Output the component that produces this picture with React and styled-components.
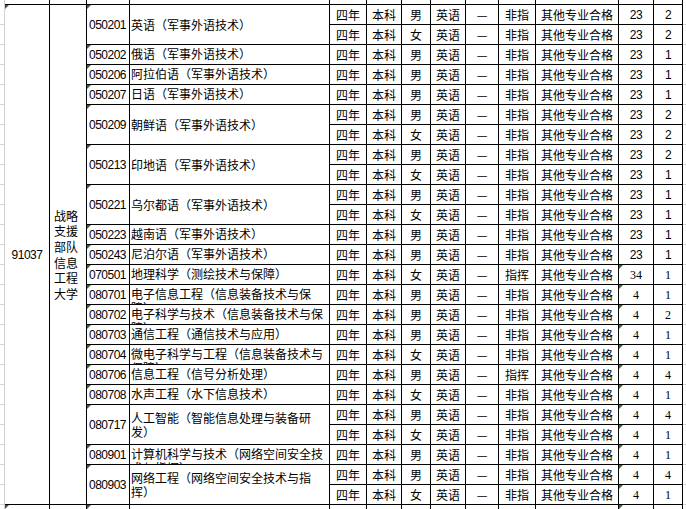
import React from "react"
import styled, { createGlobalStyle, css } from "styled-components"

const GlobalStyle = createGlobalStyle`
  html, body {
    margin: 0;
    padding: 0;
    background: #ffffff;
    overflow: hidden;
  }
  body {
    font-family: "Noto Sans CJK SC", "Liberation Sans", sans-serif;
    font-size: 12px;
    color: #000000;
  }
`

// column widths, measured between the black grid lines
const COLS = [45, 37, 43, 200, 37, 35, 29, 35, 33, 37, 83, 35, 29]

const groups = [
  { code: "050201", name: "英语（军事外语技术）", rows: [["男", "非指", "23", "2"], ["女", "非指", "23", "2"]] },
  { code: "050202", name: "俄语（军事外语技术）", rows: [["男", "非指", "23", "1"]] },
  { code: "050206", name: "阿拉伯语（军事外语技术）", rows: [["男", "非指", "23", "1"]] },
  { code: "050207", name: "日语（军事外语技术）", rows: [["男", "非指", "23", "1"]] },
  { code: "050209", name: "朝鲜语（军事外语技术）", rows: [["男", "非指", "23", "2"], ["女", "非指", "23", "2"]] },
  { code: "050213", name: "印地语（军事外语技术）", rows: [["男", "非指", "23", "2"], ["女", "非指", "23", "1"]] },
  { code: "050221", name: "乌尔都语（军事外语技术）", rows: [["男", "非指", "23", "1"], ["女", "非指", "23", "1"]] },
  { code: "050223", name: "越南语（军事外语技术）", rows: [["男", "非指", "23", "1"]] },
  { code: "050243", name: "尼泊尔语（军事外语技术）", rows: [["男", "非指", "23", "1"]] },
  { code: "070501", name: "地理科学（测绘技术与保障）", serif: true, rows: [["女", "指挥", "34", "1"]] },
  { code: "080701", name: "电子信息工程（信息装备技术与保障）", serif: true, rows: [["男", "非指", "4", "1"]] },
  { code: "080702", name: "电子科学与技术（信息装备技术与保障）", serif: true, rows: [["男", "非指", "4", "2"]] },
  { code: "080703", name: "通信工程（通信技术与应用）", serif: true, rows: [["男", "非指", "4", "1"]] },
  { code: "080704", name: "微电子科学与工程（信息装备技术与保障）", serif: true, rows: [["女", "非指", "4", "1"]] },
  { code: "080706", name: "信息工程（信号分析处理）", serif: true, rows: [["男", "指挥", "4", "4"]] },
  { code: "080708", name: "水声工程（水下信息技术）", serif: true, rows: [["女", "非指", "4", "1"]] },
  { code: "080717", name: "人工智能（智能信息处理与装备研发）", serif: true, rows: [["男", "非指", "4", "4"], ["女", "非指", "4", "1"]] },
  { code: "080901", name: "计算机科学与技术（网络空间安全技术与指挥）", serif: true, rows: [["男", "非指", "4", "1"]] },
  { code: "080903", name: "网络工程（网络空间安全技术与指挥）", serif: true, rows: [["男", "非指", "4", "4"], ["女", "非指", "4", "1"]] },
]

const Page = styled.div`
  display: flex;
  height: 509px;
  overflow: hidden;
`

const Gutter = styled.div`
  flex: ${(p) => (p.$grow ? "1 1 auto" : "0 0 4px")};
  background-image: repeating-linear-gradient(
    to bottom,
    transparent 0,
    transparent 19px,
    #d6d6d6 19px,
    #d6d6d6 20px
  );
  background-position: 0 5px;
`

const Sheet = styled.div`
  display: grid;
  grid-template-columns: ${COLS.map((w) => w + "px").join(" ")};
  grid-template-rows: 5px repeat(25, 20px) 20px;
  border-left: 1px solid #d0d0d0;
  align-self: flex-start;
`

const Cell = styled.div`
  position: relative;
  box-sizing: border-box;
  grid-column: ${(p) => p.$col};
  grid-row: ${(p) => p.$row} / span ${(p) => p.$span || 1};
  border-right: 1px solid #000000;
  border-bottom: 1px solid #000000;
  overflow: hidden;
  display: flex;
  align-items: center;
  justify-content: center;
  line-height: 14px;
  white-space: nowrap;

  ${(p) =>
    p.$flag &&
    css`
      &::before {
        content: "";
        position: absolute;
        top: 0;
        left: 0;
        border-style: solid;
        border-width: 4px 4px 0 0;
        border-color: #2b6e35 transparent transparent transparent;
      }
    `}
`

const NumCell = styled(Cell)`
  font-family: ${(p) => (p.$serif ? `"Liberation Serif", serif` : `"Liberation Sans", sans-serif`)};
  letter-spacing: ${(p) => (p.$serif ? "0" : "-0.5px")};
`

const CodeCell = styled(Cell)`
  justify-content: flex-start;
  padding-left: 2px;
  font-family: "Liberation Sans", sans-serif;
  letter-spacing: -0.5px;
`

const NameCell = styled(Cell)`
  justify-content: flex-start;
  align-items: ${(p) => (p.$span > 1 ? "center" : "flex-start")};
  padding: ${(p) => (p.$span > 1 ? "0 2px 0 1px" : "2px 2px 0 1px")};
  white-space: normal;
  line-height: 14px;
`

const SchoolCell = styled(Cell)`
  justify-content: flex-start;
  padding: 0 4px;
  white-space: normal;
  line-height: 15.6px;
`

const STUB = COLS.map((_, i) => i + 1)

export default function App() {
  let row = 2
  const body = []

  groups.forEach((g) => {
    const span = g.rows.length
    body.push(
      <CodeCell key={g.code + "c"} $col={3} $row={row} $span={span} $flag>
        {g.code}
      </CodeCell>,
      <NameCell key={g.code + "n"} $col={4} $row={row} $span={span}>
        {g.name}
      </NameCell>
    )
    g.rows.forEach(([sex, kind, plan, count], i) => {
      const r = row + i
      const k = g.code + "-" + i
      body.push(
        <Cell key={k + "e"} $col={5} $row={r}>四年</Cell>,
        <Cell key={k + "f"} $col={6} $row={r}>本科</Cell>,
        <Cell key={k + "g"} $col={7} $row={r}>{sex}</Cell>,
        <Cell key={k + "h"} $col={8} $row={r}>英语</Cell>,
        <Cell key={k + "i"} $col={9} $row={r}>—</Cell>,
        <Cell key={k + "j"} $col={10} $row={r}>{kind}</Cell>,
        <Cell key={k + "k"} $col={11} $row={r}>其他专业合格</Cell>,
        <NumCell key={k + "l"} $col={12} $row={r} $serif={g.serif} $flag={g.serif}>
          {plan}
        </NumCell>,
        <NumCell key={k + "m"} $col={13} $row={r} $serif={g.serif}>
          {count}
        </NumCell>
      )
    })
    row += span
  })

  return (
    <>
      <GlobalStyle />
      <Page>
        <Gutter />
        <Sheet>
          {STUB.map((c) => (
            <Cell key={"top" + c} $col={c} $row={1} />
          ))}
          <NumCell $col={1} $row={2} $span={25} $flag>
            91037
          </NumCell>
          <SchoolCell $col={2} $row={2} $span={25}>
            战略支援部队信息工程大学
          </SchoolCell>
          {body}
          {STUB.map((c) => (
            <Cell key={"bot" + c} $col={c} $row={27} $flag={c === 1 || c === 3 || c === 12} />
          ))}
        </Sheet>
        <Gutter $grow />
      </Page>
    </>
  )
}
